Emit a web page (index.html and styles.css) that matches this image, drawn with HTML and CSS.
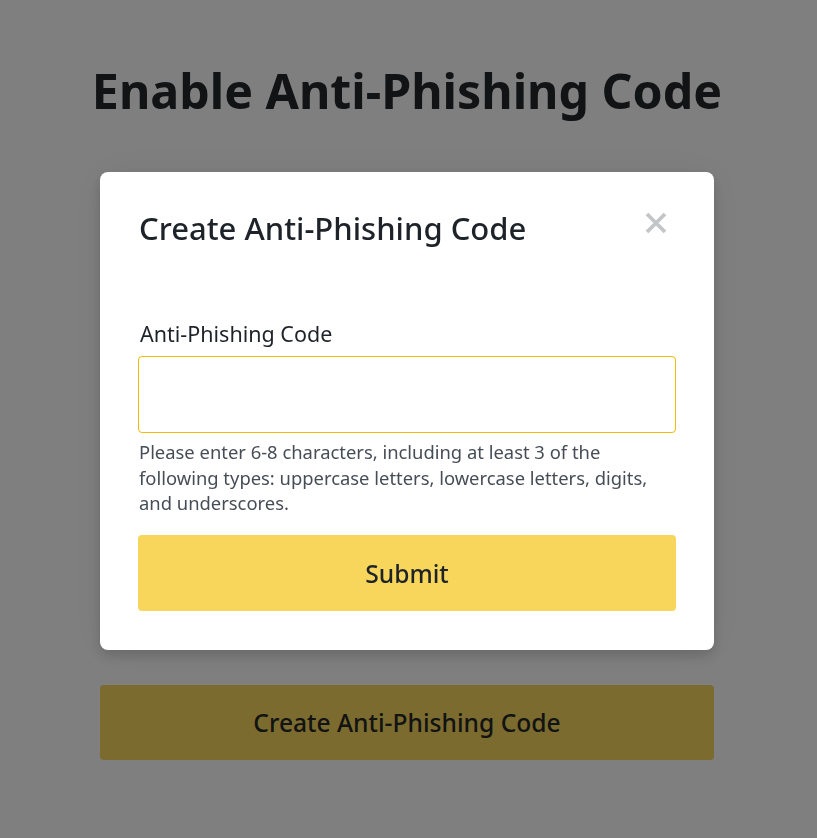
FILE: index.html
```html
<!DOCTYPE html>
<html lang="en">
<head>
<meta charset="utf-8">
<title>Enable Anti-Phishing Code</title>
<link rel="stylesheet" href="styles.css">
</head>
<body>
  <main class="page">
    <h1 class="page-title">Enable Anti-Phishing Code</h1>
    <section class="page-card">
      <button class="btn page-btn" type="button">Create Anti-Phishing Code</button>
    </section>
  </main>

  <div class="overlay">
    <div class="modal" role="dialog" aria-labelledby="modal-title">
      <div class="modal-head">
        <h2 class="modal-title" id="modal-title">Create Anti-Phishing Code</h2>
        <button class="modal-close" type="button" aria-label="Close">
          <svg viewBox="0 0 24 24" width="24" height="24" aria-hidden="true">
            <path d="M3 3 L21 21 M21 3 L3 21" stroke="currentColor" stroke-width="3.8" stroke-linecap="butt" fill="none"/>
          </svg>
        </button>
      </div>
      <form class="modal-form">
        <label class="field-label" for="code">Anti-Phishing Code</label>
        <input class="field-input" id="code" type="text">
        <p class="field-help">Please enter 6-8 characters, including at least 3 of the following types: uppercase letters, lowercase letters, digits, and underscores.</p>
        <button class="btn submit-btn" type="button">Submit</button>
      </form>
    </div>
  </div>
</body>
</html>
```

FILE: styles.css
```css
* { box-sizing: border-box; }

html, body {
  margin: 0;
  padding: 0;
}

body {
  background: #ffffff;
  font-family: "Noto Sans", Roboto, "Liberation Sans", sans-serif;
  color: #1e2329;
  min-height: 838px;
  padding-right: 3px;
}

.page {
  width: 614px;
  margin: 0 auto;
  padding-top: 60px;
  display: flex;
  flex-direction: column;
  align-items: center;
}

.page-title {
  margin: 0;
  font-size: 48.3px;
  line-height: 60px;
  font-weight: 700;
  color: #242628;
  text-align: center;
  white-space: nowrap;
}

.page-card {
  width: 100%;
  padding-top: 565px;
}

.btn {
  display: flex;
  align-items: center;
  justify-content: center;
  width: 100%;
  border: none;
  border-radius: 4px;
  background: #f8d65c;
  color: #1e2329;
  font-family: inherit;
  font-weight: 500;
  font-size: 24.6px;
  cursor: pointer;
}

.page-btn {
  height: 75px;
  color: #242628;
  padding-bottom: 1px;
}

.overlay {
  position: fixed;
  inset: 0;
  background: rgba(0, 0, 0, 0.5);
  display: flex;
  justify-content: center;
  align-items: flex-start;
  padding: 172px 3px 0 0;
}

.modal {
  width: 614px;
  background: #ffffff;
  border-radius: 8px;
  padding: 36px 38px 39px 38px;
  box-shadow: 0 6px 14px rgba(0, 0, 0, 0.16), 0 0 40px rgba(0, 0, 0, 0.06);
}

.modal-head {
  display: flex;
  justify-content: space-between;
  align-items: center;
}

.modal-title {
  margin: 0;
  font-size: 31px;
  line-height: 40px;
  font-weight: 500;
  color: #1e2329;
  padding-left: 1px;
}

.modal-close {
  display: flex;
  border: none;
  background: none;
  padding: 0;
  margin-right: 8px;
  margin-top: -10px;
  color: #c3c5c9;
  cursor: pointer;
}

.modal-form {
  display: flex;
  flex-direction: column;
  margin-top: 72px;
}

.field-label {
  font-size: 21.5px;
  line-height: 28px;
  color: #1e2329;
  padding-left: 2px;
}

.field-input {
  margin-top: 8px;
  height: 77px;
  border: 1px solid #f0b90b;
  border-radius: 4px;
  outline: none;
  font-family: inherit;
  font-size: 20px;
  padding: 0 16px;
}

.field-help {
  margin: 6px 0 0;
  font-size: 18.4px;
  line-height: 25.5px;
  color: #474d57;
  padding-left: 1px;
}

.submit-btn {
  margin-top: 19.5px;
  height: 76px;
}
```
